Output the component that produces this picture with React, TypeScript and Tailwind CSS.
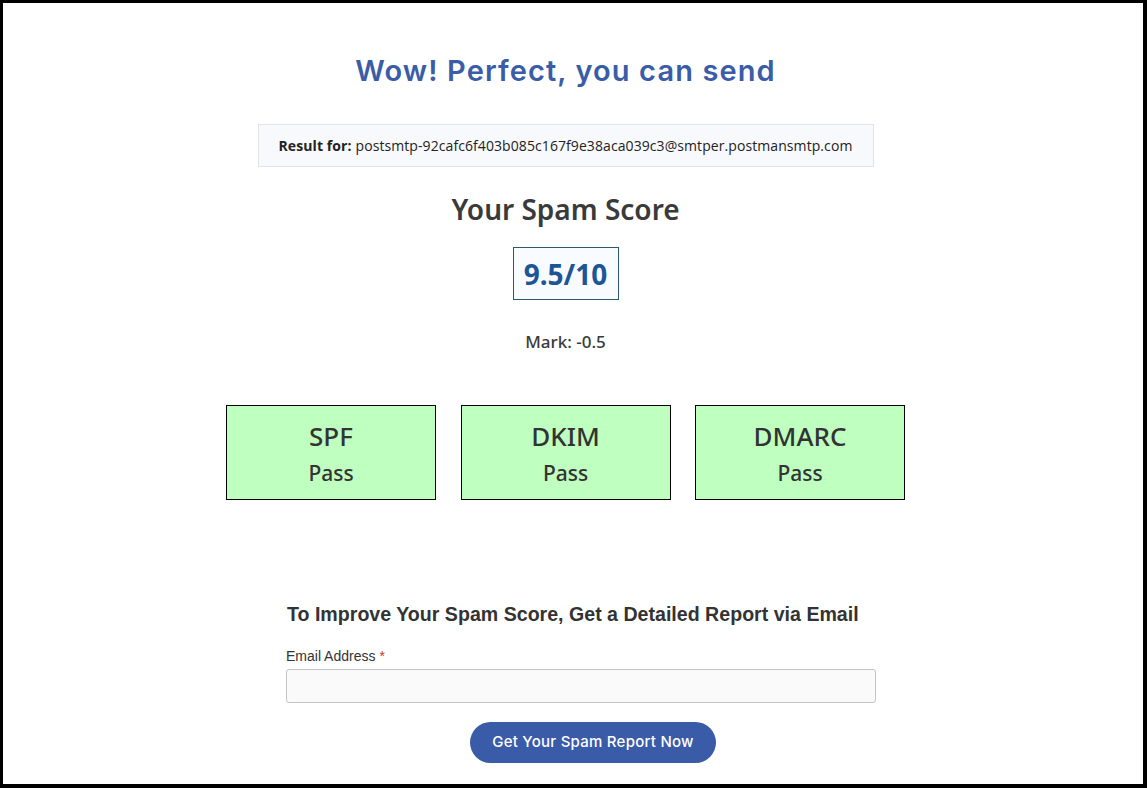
import React from "react";

const cards = ["SPF", "DKIM", "DMARC"];
const noto = { fontFamily: "'Noto Sans', 'Open Sans', sans-serif" };

export default function App() {
  return (
    <div className="w-[1147px] h-[788px] box-border border-black border-t-[3px] border-l-[3px] border-r-4 border-b-4 bg-white overflow-hidden">
      <div className="w-[1125px] flex flex-col items-center pt-[50px]">
        <h1
          className="text-[29px] leading-[36px] font-semibold text-[#3b5da8] tracking-[1.1px]"
          style={{ fontFamily: "Inter, 'Open Sans', sans-serif" }}
        >
          Wow! Perfect, you can send
        </h1>
        <div
          className="mt-[35px] w-[616px] h-[43px] box-border border border-[#e3e3e3] bg-[#f8f9fc] flex items-center justify-center text-[14px] text-[#222] tracking-[0.08px]"
          style={{ fontFamily: "'Open Sans', sans-serif" }}
        >
          <span className="font-bold mr-[4px]">Result for:</span>
          <span>postsmtp-92cafc6f403b085c167f9e38aca039c3@smtper.postmansmtp.com</span>
        </div>
        <h2 className="mt-[24px] text-[28px] leading-[36px] font-semibold text-[#3a3a3a]" style={noto}>
          Your Spam Score
        </h2>
        <div
          className="mt-[20px] w-[106px] h-[53px] box-border border border-[#2c5870] bg-[#f8fbff] flex items-center justify-center text-[28px] font-bold text-[#1d5596]"
          style={noto}
        >
          9.5/10
        </div>
        <div className="mt-[30px] text-[17px] leading-[24px] font-medium text-[#3a3a3a]" style={noto}>
          Mark: -0.5
        </div>
        <div className="mt-[51px] flex" style={noto}>
          {cards.map((c, i) => (
            <div
              key={c}
              className={
                "w-[210px] h-[95px] box-border border border-black bg-[#bfffbf] flex flex-col items-center pt-[12px] text-[#333] " +
                (i === 1 ? "mx-[24.5px]" : "")
              }
            >
              <div className="text-[26px] leading-[36px] font-medium">{c}</div>
              <div className="mt-[4px] text-[21px] leading-[30px] font-medium">Pass</div>
            </div>
          ))}
        </div>
      </div>
      <div className="ml-[283px] w-[590px] mt-[100px]" style={{ fontFamily: "'Liberation Sans', Arial, sans-serif" }}>
        <div className="text-[19.6px] leading-[28px] font-bold text-[#333] pl-[1px]">
          To Improve Your Spam Score, Get a Detailed Report via Email
        </div>
        <div className="mt-[18px] text-[14px] leading-[20px] text-[#333]">
          Email Address <span className="text-[#c9302c]">*</span>
        </div>
        <div className="mt-[3px] h-[34px] box-border border border-[#c4c4c4] rounded-[3px] bg-[#fafafa]" />
        <button
          className="mt-[19px] ml-[184px] w-[246px] h-[41px] rounded-full bg-[#3a5ba8] text-white text-[15px] font-medium tracking-[0.25px] flex items-center justify-center"
          style={{ fontFamily: "Inter, 'Open Sans', sans-serif" }}
        >
          Get Your Spam Report Now
        </button>
      </div>
    </div>
  );
}
